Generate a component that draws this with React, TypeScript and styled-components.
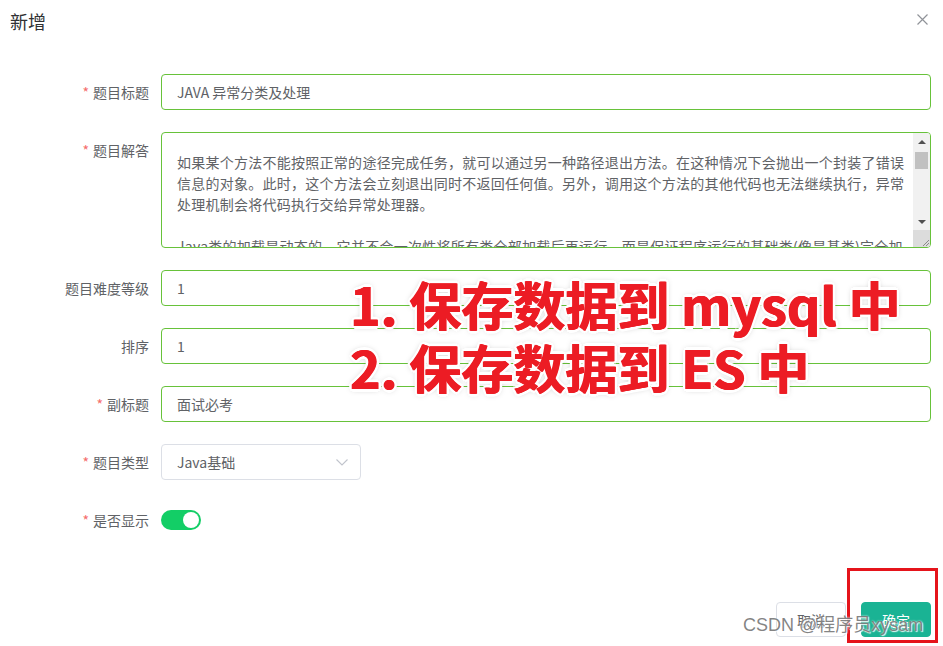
import React from 'react';
import styled, { createGlobalStyle } from 'styled-components';

const GlobalStyle = createGlobalStyle`
  html, body {
    margin: 0;
    padding: 0;
    background: #ffffff;
  }
  body {
    font-family: "Noto Sans CJK SC", "Noto Sans", sans-serif;
  }
`;

const Dialog = styled.div`
  position: relative;
  width: 943px;
  height: 646px;
  display: flex;
  flex-direction: column;
  background: #fff;
  overflow: hidden;
`;

const Header = styled.div`
  display: flex;
  align-items: flex-start;
  justify-content: space-between;
  padding: 9px 15px 0 10px;
  height: 24px;
`;

const Title = styled.span`
  font-size: 18px;
  line-height: 24px;
  color: #303133;
`;

const CloseBtn = styled.button`
  border: none;
  background: none;
  padding: 0;
  margin-top: 5px;
  width: 11px;
  height: 11px;
  display: flex;
  cursor: pointer;
`;

const Form = styled.form`
  display: flex;
  flex-direction: column;
  gap: 22px;
  padding: 41px 12px 0 0;
`;

const Row = styled.div`
  display: flex;
  align-items: flex-start;
`;

const Label = styled.label`
  width: 149px;
  padding-right: 12px;
  text-align: right;
  font-size: 14px;
  line-height: 36px;
  color: #606266;
  flex-shrink: 0;
`;

const Star = styled.span`
  color: #f56c6c;
  margin-right: 4px;
`;

const Input = styled.input`
  flex: 1;
  box-sizing: border-box;
  height: 36px;
  border: 1px solid #67c23a;
  border-radius: 4px;
  padding: 0 15px;
  font-family: "Noto Sans CJK SC", sans-serif;
  font-size: 14px;
  color: #606266;
  outline: none;
`;

const AreaBox = styled.div`
  flex: 1;
  height: 116px;
  box-sizing: border-box;
  border: 1px solid #67c23a;
  border-radius: 4px;
  display: flex;
  overflow: hidden;
`;

const Area = styled.textarea`
  flex: 1;
  border: none;
  outline: none;
  resize: none;
  overflow: hidden;
  white-space: pre;
  padding: 19px 15px 0;
  margin: 0;
  font-family: "Noto Sans CJK SC", sans-serif;
  font-size: 14px;
  line-height: 21px;
  letter-spacing: 0.26px;
  color: #606266;
  background: transparent;
`;

const Scrollbar = styled.div`
  width: 17px;
  background: #f1f1f1;
  display: flex;
  flex-direction: column;
  align-items: center;
`;

const ArrowBtn = styled.div<{ $down?: boolean }>`
  width: 17px;
  height: 17px;
  display: flex;
  align-items: center;
  justify-content: center;
  &::after {
    content: '';
    width: 0;
    height: 0;
    border-left: 4px solid transparent;
    border-right: 4px solid transparent;
    ${(p) => (p.$down ? 'border-top: 4px solid #505050;' : 'border-bottom: 4px solid #505050;')}
  }
`;

const Thumb = styled.div`
  width: 13px;
  height: 17px;
  margin-top: 2px;
  background: #c1c1c1;
`;

const Track = styled.div`
  flex: 1;
`;

const Corner = styled.div`
  width: 17px;
  height: 17px;
  background: #dcdcdc;
  display: flex;
  align-items: flex-end;
  justify-content: flex-end;
`;

const Select = styled.div`
  width: 200px;
  height: 36px;
  box-sizing: border-box;
  border: 1px solid #dcdfe6;
  border-radius: 4px;
  padding: 0 12px 0 15px;
  display: flex;
  align-items: center;
  justify-content: space-between;
  font-size: 14px;
  color: #606266;
`;

const SwitchCell = styled.div`
  height: 36px;
  display: flex;
  align-items: center;
`;

const Switch = styled.div<{ $on: boolean }>`
  position: relative;
  width: 40px;
  height: 20px;
  border-radius: 10px;
  background: ${(p) => (p.$on ? '#13ce66' : '#dcdfe6')};
  &::after {
    content: '';
    position: absolute;
    top: 2px;
    left: ${(p) => (p.$on ? '22px' : '2px')};
    width: 16px;
    height: 16px;
    border-radius: 50%;
    background: #fff;
  }
`;

const Footer = styled.div`
  margin-top: auto;
  display: flex;
  justify-content: flex-end;
  gap: 15px;
  padding: 0 12px 9px 0;
`;

const Button = styled.button<{ $primary?: boolean }>`
  height: 35px;
  padding: 0 20px;
  min-width: 68px;
  box-sizing: border-box;
  border-radius: 4px;
  font-family: "Noto Sans CJK SC", sans-serif;
  font-size: 14px;
  cursor: pointer;
  border: 1px solid ${(p) => (p.$primary ? '#1ab394' : '#dcdfe6')};
  background: ${(p) => (p.$primary ? '#1ab394' : '#fff')};
  color: ${(p) => (p.$primary ? '#fff' : '#606266')};
`;

const Annotation = styled.div`
  position: absolute;
  left: 350px;
  top: 272px;
  font-family: "Noto Sans CJK SC", sans-serif;
  font-weight: 700;
  font-size: 52px;
  line-height: 63px;
  color: #ec1c24;
  white-space: pre;
  pointer-events: none;
  text-shadow:
    0.6px 0 #ec1c24, -0.6px 0 #ec1c24,
    3px 0 #fff, -3px 0 #fff, 0 3px #fff, 0 -3px #fff,
    2px 2px #fff, -2px -2px #fff, 2px -2px #fff, -2px 2px #fff,
    0 0 6px rgba(0, 0, 0, 0.35);
`;

const Highlight = styled.div`
  position: absolute;
  left: 847px;
  top: 568px;
  width: 91px;
  height: 75px;
  box-sizing: border-box;
  border: 3px solid #e5141b;
  pointer-events: none;
`;

const Watermark = styled.div`
  position: absolute;
  left: 743px;
  top: 613px;
  font-family: "Liberation Sans", "Noto Sans CJK SC", sans-serif;
  font-size: 18px;
  line-height: 24px;
  color: rgba(110, 110, 110, 0.85);
  text-shadow: 0 0 2px #fff, 1px 1px 1px rgba(255, 255, 255, 0.9);
  pointer-events: none;
`;

const answer = [
  '如果某个方法不能按照正常的途径完成任务，就可以通过另一种路径退出方法。在这种情况下会抛出一个封装了错误',
  '信息的对象。此时，这个方法会立刻退出同时不返回任何值。另外，调用这个方法的其他代码也无法继续执行，异常',
  '处理机制会将代码执行交给异常处理器。',
  '',
  'Java类的加载是动态的，它并不会一次性将所有类全部加载后再运行，而是保证程序运行的基础类(像是基类)完全加',
  '载到jvm中，至于其他类，则在需要的时候才加载。',
].join('\n');

const App: React.FC = () => {
  return (
    <Dialog>
      <GlobalStyle />
      <Header>
        <Title>新增</Title>
        <CloseBtn aria-label="close">
          <svg width="11" height="11" viewBox="0 0 11 11">
            <path d="M0.5 0.5 L10.5 10.5 M10.5 0.5 L0.5 10.5" stroke="#909399" strokeWidth="1.2" />
          </svg>
        </CloseBtn>
      </Header>

      <Form>
        <Row>
          <Label><Star>*</Star>题目标题</Label>
          <Input defaultValue="JAVA 异常分类及处理" />
        </Row>
        <Row>
          <Label><Star>*</Star>题目解答</Label>
          <AreaBox>
            <Area defaultValue={answer} />
            <Scrollbar>
              <ArrowBtn />
              <Thumb />
              <Track />
              <ArrowBtn $down />
              <Corner>
                <svg width="10" height="10" viewBox="0 0 10 10">
                  <path d="M9 3 L3 9 M9 6 L6 9" stroke="#8a8a8a" strokeWidth="1" />
                </svg>
              </Corner>
            </Scrollbar>
          </AreaBox>
        </Row>
        <Row>
          <Label>题目难度等级</Label>
          <Input defaultValue="1" />
        </Row>
        <Row>
          <Label>排序</Label>
          <Input defaultValue="1" />
        </Row>
        <Row>
          <Label><Star>*</Star>副标题</Label>
          <Input defaultValue="面试必考" />
        </Row>
        <Row>
          <Label><Star>*</Star>题目类型</Label>
          <Select>
            <span>Java基础</span>
            <svg width="12" height="7" viewBox="0 0 12 7">
              <path d="M0.5 0.5 L6 6 L11.5 0.5" fill="none" stroke="#c0c4cc" strokeWidth="1.1" />
            </svg>
          </Select>
        </Row>
        <Row>
          <Label><Star>*</Star>是否显示</Label>
          <SwitchCell>
            <Switch $on />
          </SwitchCell>
        </Row>
      </Form>

      <Footer>
        <Button>取消</Button>
        <Button $primary>确定</Button>
      </Footer>

      <Annotation>{'1. 保存数据到 mysql 中\n2. 保存数据到 ES 中'}</Annotation>
      <Highlight />
      <Watermark>CSDN @程序员xysam</Watermark>
    </Dialog>
  );
};

export default App;
